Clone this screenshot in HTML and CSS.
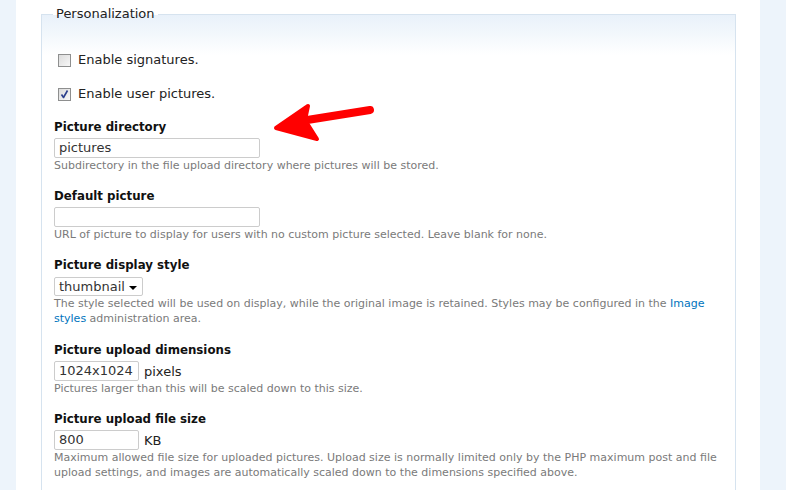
FILE: index.html
```html
<!DOCTYPE html>
<html>
<head>
<meta charset="utf-8">
<title>Personalization</title>
<link rel="stylesheet" href="styles.css">
</head>
<body>
<div class="page">
  <div class="side side-left"></div>
  <main class="main">
    <fieldset class="group">
      <legend class="group-title">Personalization</legend>
      <div class="check-row">
        <span class="checkbox"></span>
        <span class="check-label">Enable signatures.</span>
      </div>
      <div class="check-row">
        <span class="checkbox checked">
          <svg viewBox="0 0 11 11" width="11" height="11"><path d="M2.5 5.5 L4.5 8.5 L8.5 1.5" fill="none" stroke="#2b3f8c" stroke-width="1.6" stroke-linejoin="round"/></svg>
        </span>
        <span class="check-label">Enable user pictures.</span>
      </div>

      <div class="form-item">
        <div class="label">Picture directory</div>
        <div class="control"><span class="input wide">pictures</span></div>
        <div class="desc">Subdirectory in the file upload directory where pictures will be stored.</div>
      </div>

      <div class="form-item">
        <div class="label">Default picture</div>
        <div class="control"><span class="input wide"></span></div>
        <div class="desc">URL of picture to display for users with no custom picture selected. Leave blank for none.</div>
      </div>

      <div class="form-item select-item">
        <div class="label">Picture display style</div>
        <div class="control"><span class="select">thumbnail<span class="caret"></span></span></div>
        <div class="desc">The style selected will be used on display, while the original image is retained. Styles may be configured in the <a class="link" href="#">Image</a><br><a class="link" href="#">styles</a> administration area.</div>
      </div>

      <div class="form-item">
        <div class="label">Picture upload dimensions</div>
        <div class="control"><span class="input short">1024x1024</span><span class="suffix">pixels</span></div>
        <div class="desc">Pictures larger than this will be scaled down to this size.</div>
      </div>

      <div class="form-item">
        <div class="label">Picture upload file size</div>
        <div class="control"><span class="input short">800</span><span class="suffix">KB</span></div>
        <div class="desc">Maximum allowed file size for uploaded pictures. Upload size is normally limited only by the PHP maximum post and file<br>upload settings, and images are automatically scaled down to the dimensions specified above.</div>
      </div>
    </fieldset>
    <svg class="arrow" viewBox="0 0 110 45" width="110" height="45">
      <line x1="32" y1="22" x2="101" y2="11" stroke="#f00" stroke-width="8" stroke-linecap="round"/>
      <polygon points="7,29 39,7 36,21 48,40" fill="#f00" stroke="#f00" stroke-width="4" stroke-linejoin="round"/>
    </svg>
  </main>
  <div class="side side-right"></div>
</div>
</body>
</html>
```

FILE: styles.css
```css
html, body {
  margin: 0;
  padding: 0;
  background: #fff;
}
body {
  font-family: "DejaVu Sans", Verdana, sans-serif;
  color: #222;
  font-size: 13px;
}
.page {
  display: flex;
  width: 786px;
  height: 490px;
  overflow: hidden;
}
.side {
  background: #edf4fb;
  flex: none;
}
.side-left { width: 16px; }
.side-right { width: 26px; }
.main {
  flex: 1;
  position: relative;
  padding: 0 24px 0 25px;
}
.group {
  margin: 5px 0 0 0;
  padding: 28px 12px 0 12px;
  border: 1px solid #d6e3ef;
  background: linear-gradient(to bottom, #e9f1fa 0px, #f3f8fc 20px, #ffffff 40px);
  min-width: 0;
}
.group-title {
  padding: 0 3px;
  margin-left: -1px;
  font-size: 13px;
  line-height: 18px;
  color: #222;
}
.check-row {
  display: flex;
  align-items: center;
  height: 18px;
  margin-bottom: 16px;
  padding-left: 4px;
}
.checkbox {
  width: 11px;
  height: 11px;
  border: 1px solid #8e8f8f;
  background: linear-gradient(135deg, #dcdcdc, #f7f7f7);
  margin-right: 7px;
  display: flex;
  align-items: center;
  justify-content: center;
  flex: none;
}
.check-label {
  font-size: 13px;
  line-height: 18px;
}
.check-row + .form-item { margin-top: -1px; }
.form-item {
  margin-bottom: 14px;
}
.label {
  font-weight: bold;
  font-size: 11.8px;
  line-height: 18px;
  color: #111;
}
.control {
  display: flex;
  align-items: center;
  margin-top: 2px;
  height: 20px;
}
.input, .select {
  box-sizing: border-box;
  height: 20px;
  border: 1px solid #ccc;
  border-radius: 2px;
  font-size: 13px;
  line-height: 18px;
  padding: 0 4px;
  color: #333;
  background: #fff;
}
.input.wide { width: 206px; }
.input.short { width: 85px; }
.suffix {
  margin-left: 5px;
  font-size: 13px;
}
.select-item .control {
  margin-top: 3px;
  height: 19px;
}
.select {
  height: 19px;
  width: 89px;
  display: flex;
  align-items: center;
  justify-content: space-between;
}
.caret {
  width: 0;
  height: 0;
  border-left: 4px solid transparent;
  border-right: 4px solid transparent;
  border-top: 4px solid #000;
  margin-right: 1px;
  margin-top: 2px;
}
.select-item { margin-bottom: 15px; }
.desc {
  font-size: 11px;
  line-height: 15px;
  color: #7a7a7a;
  white-space: nowrap;
}
.link {
  color: #0074bd;
  text-decoration: none;
}
.arrow {
  position: absolute;
  left: 253px;
  top: 99px;
}
```
